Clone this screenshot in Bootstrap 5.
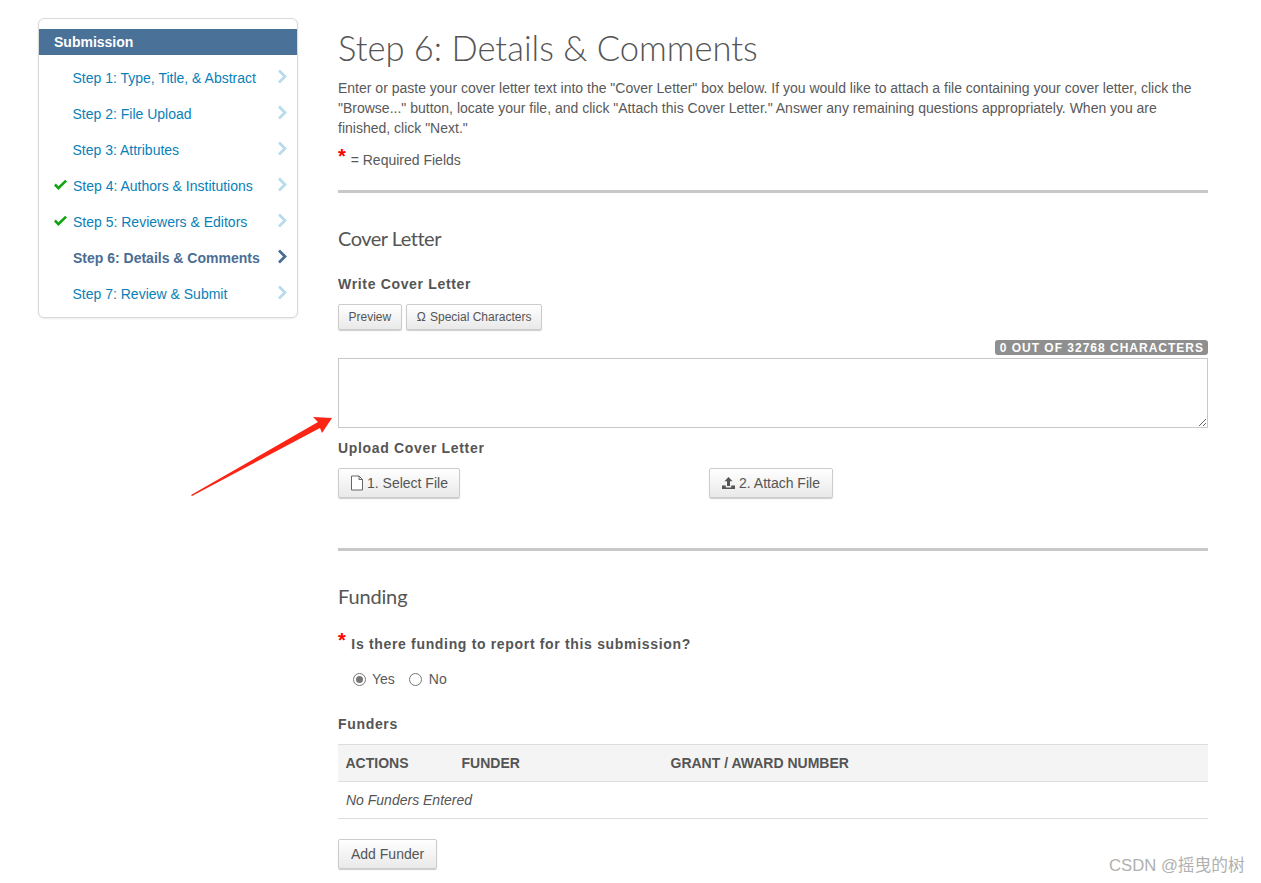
<!DOCTYPE html>
<html lang="en">
<head>
<meta charset="utf-8">
<title>Step 6: Details &amp; Comments</title>
<link href="https://cdn.jsdelivr.net/npm/bootstrap@5.3.0/dist/css/bootstrap.min.css" rel="stylesheet">
<style>
html,body{height:883px;overflow:hidden}
body{font-family:"Liberation Sans",Arial,sans-serif;font-size:14px;line-height:20px;color:#595959;background:#fff}
.page-shell{position:relative;height:883px;overflow:hidden;padding:18px 0 0 38px;gap:40px}
.side-panel{width:260px;height:300px;flex:none;border:1px solid #d9d9d9;border-radius:6px;padding-top:10px;box-shadow:0 1px 2px rgba(0,0,0,.08)}
.side-title{background:#4a7198;color:#fff;font-weight:700;font-size:14px;height:26px;line-height:27px;padding-left:15px;margin-bottom:5px}
.step-row{height:36px;padding:0 9px 0 15px;color:#0a7fb8;text-decoration:none}
.step-row:hover{color:#0a7fb8}
.step-check{width:20px;flex:none;line-height:0;margin-top:-3px;margin-left:-1px}
.step-blank{width:19px;flex:none}
.step-off{margin-left:-.5px}
.step-on{color:#4a6d94;font-weight:700}
.step-chev{margin-left:auto;line-height:0;margin-top:-3px}
.main-col{width:870px;flex:none}
.step-title{font-family:"Lato",sans-serif;font-weight:300;font-size:34.5px;line-height:44px;color:#555;margin:8px 0 8px}
.intro{margin:0 0 10px}
.req{color:#f00;font-weight:700;font-size:20px;line-height:0;vertical-align:2px;margin-right:1px;letter-spacing:0}
.req-line{margin-bottom:20px;height:22px;padding-top:2px}
.rule{height:3px;background:#c8c8c8;border:0;margin:0;opacity:1}
.rule-b{margin-top:50px}
.sec-title{font-family:"Lato",sans-serif;font-weight:400;font-size:20px;line-height:26px;color:#555;margin:0}
.sec-a{margin-top:32px;margin-bottom:23px;letter-spacing:-.5px}
.sec-b{margin-top:32px;margin-bottom:25px;letter-spacing:-.15px}
.lbl{font-weight:700;font-size:14px;letter-spacing:.67px;line-height:20px;color:#555;margin:0}
.lbl-write{margin-bottom:10px}
.lbl-up{margin-top:10px;margin-bottom:10px}
.lbl-fund{margin-top:25px;margin-bottom:10px}
.tool-btn{background:linear-gradient(#fff,#e9e9e9);border:1px solid #ccc;border-radius:2px;box-shadow:0 1px 1px rgba(0,0,0,.2);color:#555;padding:0}
.tool-btn:hover{color:#555;border-color:#ccc}
.btn-sm-a{font-size:12px;height:26px;line-height:24px;padding:0 9.5px}
.btn-omega{width:136px;padding:0 0 0 10px;text-align:left}
.omega{margin-right:1px}
.btn-lg-a{font-size:14px;height:30px;line-height:28px;padding:0 12px}
.btn-file{font-size:14px;height:30px;line-height:28px;padding:0 11px}
.file-row{gap:3px}
.count-wrap{margin-top:10px;height:18px}
.count-pill{background:#8f8f8f;color:#fff;font-weight:700;font-size:12px;letter-spacing:1px;line-height:16px;height:15px;border-radius:3px;padding:0 4px 0 5px}
.letter-box{display:block;width:870px;height:70px;border:1px solid #c8c8c8;border-radius:0;padding:4px;outline:0;background:#fff;margin:0}
.upload-gap{width:371px}
.radio-row{height:20px;padding-left:15px;margin-top:15px}
.f-radio{width:13px;height:13px;border:1px solid #767676;border-radius:50%;flex:none;background:#fff;display:inline-block;position:relative}
.f-radio.on::after{content:"";position:absolute;inset:2px;background:#767676;border-radius:50%}
.r-yes{margin-left:6px;margin-right:14px}
.r-no{margin-left:7px}
.fund-tbl{--bs-table-border-color:#ddd;margin:0}
.fund-tbl th{background:#f4f4f4;font-size:14px;text-transform:uppercase;height:37px;padding:0 7.5px;vertical-align:middle;border-top:1px solid #ddd;border-bottom:1px solid #ddd;color:#555}
.fund-tbl td{height:37px;padding:0 8px;vertical-align:middle;font-style:italic;border-bottom:1px solid #ddd;color:#555}
.col-act{width:116px}.col-fund{width:209px}
.add-btn{margin-top:20px}
.mark-arrow{position:absolute;left:185px;top:410px;width:155px;height:95px}
.csdn-mark{position:absolute;left:1109px;top:855px;font-size:16.7px;line-height:22px;color:#b0b0b0;font-family:"Liberation Sans","Noto Sans CJK SC",sans-serif;white-space:nowrap}
</style>
</head>
<body>
<div class="page-shell d-flex align-items-start">
  <aside class="side-panel bg-white">
    <div class="side-title">Submission</div>
    <nav>
      <a href="#" class="step-row d-flex align-items-center"><span class="step-blank"></span><span class="step-off">Step 1: Type, Title, &amp; Abstract</span><span class="step-chev"><svg width="11" height="15" viewBox="0 0 11 15"><path d="M2 1.5 8 7.5 2 13.5" fill="none" stroke="#b9dcec" stroke-width="2.8"/></svg></span></a>
      <a href="#" class="step-row d-flex align-items-center"><span class="step-blank"></span><span class="step-off">Step 2: File Upload</span><span class="step-chev"><svg width="11" height="15" viewBox="0 0 11 15"><path d="M2 1.5 8 7.5 2 13.5" fill="none" stroke="#b9dcec" stroke-width="2.8"/></svg></span></a>
      <a href="#" class="step-row d-flex align-items-center"><span class="step-blank"></span><span class="step-off">Step 3: Attributes</span><span class="step-chev"><svg width="11" height="15" viewBox="0 0 11 15"><path d="M2 1.5 8 7.5 2 13.5" fill="none" stroke="#b9dcec" stroke-width="2.8"/></svg></span></a>
      <a href="#" class="step-row d-flex align-items-center"><span class="step-check"><svg width="15" height="12" viewBox="0 0 15 12"><path d="M1 6.5 2.8 4.6 5.4 7.2 12.2.8 14 2.6 5.4 11z" fill="#0fa50f"/></svg></span><span>Step 4: Authors &amp; Institutions</span><span class="step-chev"><svg width="11" height="15" viewBox="0 0 11 15"><path d="M2 1.5 8 7.5 2 13.5" fill="none" stroke="#b9dcec" stroke-width="2.8"/></svg></span></a>
      <a href="#" class="step-row d-flex align-items-center"><span class="step-check"><svg width="15" height="12" viewBox="0 0 15 12"><path d="M1 6.5 2.8 4.6 5.4 7.2 12.2.8 14 2.6 5.4 11z" fill="#0fa50f"/></svg></span><span>Step 5: Reviewers &amp; Editors</span><span class="step-chev"><svg width="11" height="15" viewBox="0 0 11 15"><path d="M2 1.5 8 7.5 2 13.5" fill="none" stroke="#b9dcec" stroke-width="2.8"/></svg></span></a>
      <a href="#" class="step-row step-on d-flex align-items-center"><span class="step-blank"></span><span>Step 6: Details &amp; Comments</span><span class="step-chev"><svg width="11" height="15" viewBox="0 0 11 15"><path d="M2 1.5 8 7.5 2 13.5" fill="none" stroke="#4a6d94" stroke-width="2.8"/></svg></span></a>
      <a href="#" class="step-row d-flex align-items-center"><span class="step-blank"></span><span class="step-off">Step 7: Review &amp; Submit</span><span class="step-chev"><svg width="11" height="15" viewBox="0 0 11 15"><path d="M2 1.5 8 7.5 2 13.5" fill="none" stroke="#b9dcec" stroke-width="2.8"/></svg></span></a>
    </nav>
  </aside>
  <main class="main-col">
    <h1 class="step-title">Step 6: Details &amp; Comments</h1>
    <p class="intro">Enter or paste your cover letter text into the "Cover Letter" box below. If you would like to attach a file containing your cover letter, click the "Browse..." button, locate your file, and click "Attach this Cover Letter." Answer any remaining questions appropriately. When you are finished, click "Next."</p>
    <div class="req-line"><span class="req">*</span> = Required Fields</div>
    <hr class="rule">
    <h2 class="sec-title sec-a">Cover Letter</h2>
    <div class="lbl lbl-write">Write Cover Letter</div>
    <div class="d-flex gap-1">
      <button type="button" class="btn tool-btn btn-sm-a">Preview</button>
      <button type="button" class="btn tool-btn btn-sm-a btn-omega"><span class="omega">Ω</span> Special Characters</button>
    </div>
    <div class="count-wrap d-flex justify-content-end"><span class="count-pill">0 OUT OF 32768 CHARACTERS</span></div>
    <textarea class="letter-box" aria-label="Cover letter"></textarea>
    <div class="lbl lbl-up">Upload Cover Letter</div>
    <div class="d-flex">
      <div class="upload-gap"><button type="button" class="btn tool-btn btn-file d-inline-flex align-items-center file-row"><svg width="14" height="16" viewBox="0 0 14 16"><path d="M1.5 1h7.5l3.5 3.5V15h-11zM9 1v3.5h3.5" fill="#fff" stroke="#666" stroke-width="1"/></svg>1. Select File</button></div>
      <button type="button" class="btn tool-btn btn-lg-a d-inline-flex align-items-center gap-1"><svg width="13" height="14" viewBox="0 0 13 14"><path d="M6.5 1 10.5 5.2H8V10H5V5.2H2.5zM0 9.5h3.8v2h5.4v-2H13V13H0z" fill="#555"/></svg>2. Attach File</button>
    </div>
    <hr class="rule rule-b">
    <h2 class="sec-title sec-b">Funding</h2>
    <div class="lbl"><span class="req">*</span> Is there funding to report for this submission?</div>
    <div class="radio-row d-flex align-items-center">
      <span class="f-radio on"></span><span class="r-yes">Yes</span>
      <span class="f-radio"></span><span class="r-no">No</span>
    </div>
    <div class="lbl lbl-fund">Funders</div>
    <table class="table fund-tbl">
      <thead><tr><th class="col-act">Actions</th><th class="col-fund">Funder</th><th>Grant / Award Number</th></tr></thead>
      <tbody><tr><td colspan="3">No Funders Entered</td></tr></tbody>
    </table>
    <button type="button" class="btn tool-btn btn-lg-a add-btn">Add Funder</button>
  </main>
  <svg class="mark-arrow" viewBox="0 0 155 95"><path d="M6 85 133 12 128 7 147 8 137 23 135 18 7 86z" fill="#fb2415"/></svg>
  <div class="csdn-mark">CSDN @摇曳的树</div>
</div>
<script src="https://cdn.jsdelivr.net/npm/bootstrap@5.3.0/dist/js/bootstrap.bundle.min.js"></script>
</body>
</html>
